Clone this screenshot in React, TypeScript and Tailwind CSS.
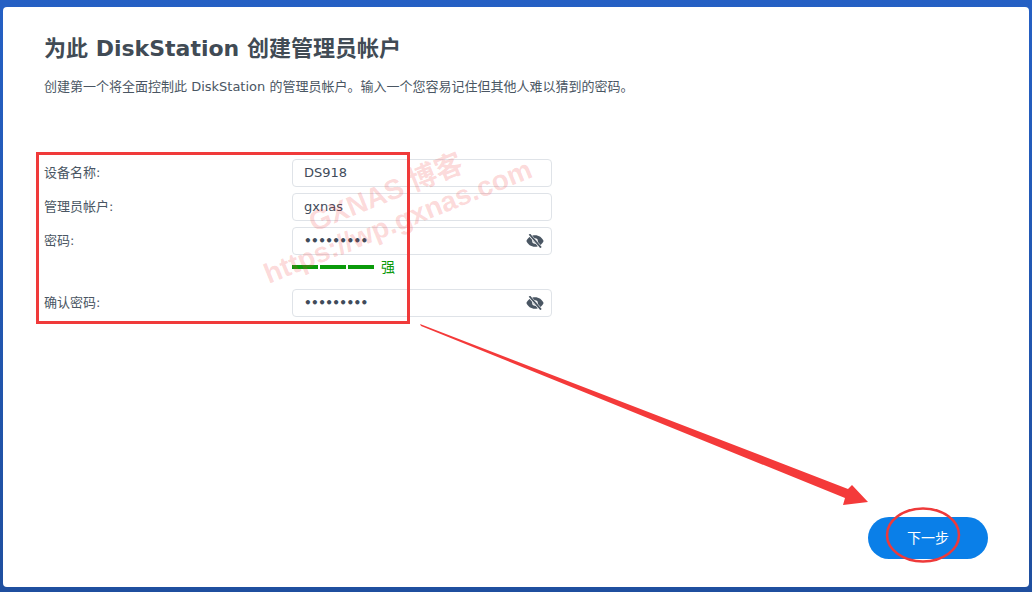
const sans = `font-["DejaVu_Sans","Noto_Sans_CJK_SC",sans-serif]`;

function EyeOff() {
  return (
    <svg width="18" height="14" viewBox="0 0 18 14" className="text-[#4a5663]" aria-hidden="true">
      <path
        fill="currentColor"
        fillRule="evenodd"
        d="M9 1.2C5 1.2 1.8 3.6 0.4 7c1.4 3.4 4.6 5.8 8.6 5.8s7.2-2.4 8.6-5.8C16.2 3.6 13 1.2 9 1.2ZM9 4.2a2.8 2.8 0 1 1 0 5.6a2.8 2.8 0 0 1 0-5.6Z"
      />
      <circle cx="9" cy="7" r="1.6" fill="currentColor" />
      <path d="M3.4 0.6L14.8 13.4" stroke="#fff" strokeWidth="3" />
      <path d="M3.4 0.2L15 13.6" stroke="currentColor" strokeWidth="1.8" />
    </svg>
  );
}

function Field({
  label,
  value,
  password,
}: {
  label: string;
  value: string;
  password?: boolean;
}) {
  return (
    <div className="flex items-center">
      <span className="w-[248px] text-[13px] text-[#4a5663]">{label}</span>
      <div className="flex h-7 w-[260px] items-center justify-between rounded-[4px] border border-[#dfe3e8] bg-white pl-[11px] pr-[7px]">
        <span className={password ? "text-[12px] font-bold tracking-[-0.6px] text-[#414b5a]" : "text-[13px] text-[#414b5a]"}>{value}</span>
        {password && <EyeOff />}
      </div>
    </div>
  );
}

function Strength() {
  return (
    <div className="flex h-[34px] items-start pl-[248px] pt-[2px]">
      <div className="mt-[8px] flex gap-[2px]">
        <span className="h-[4px] w-[26px] bg-[#0a9a0a]" />
        <span className="h-[4px] w-[26px] bg-[#0a9a0a]" />
        <span className="h-[4px] w-[26px] bg-[#0a9a0a]" />
      </div>
      <span className="ml-[7px] text-[14px] leading-[20px] text-[#0a9a0a]">强</span>
    </div>
  );
}

function Annotations() {
  return (
    <>
      {/* watermark */}
      <div className={`pointer-events-none absolute left-[286px] top-[172px] w-[200px] -rotate-[22deg] whitespace-nowrap text-center font-["Liberation_Sans","Noto_Sans_CJK_SC",sans-serif] text-[28px] font-bold text-[#f04040]/20`}>
        GXNAS 博客
      </div>
      <div className={`pointer-events-none absolute left-[248px] top-[201px] w-[300px] -rotate-[22deg] whitespace-nowrap text-center font-["Liberation_Sans",sans-serif] text-[28px] font-bold text-[#f04040]/20`}>
        https://wp.gxnas.com
      </div>
      {/* red box */}
      <div className="pointer-events-none absolute left-[36px] top-[152px] h-[172px] w-[374px] border-[3px] border-[#f03a3a]" />
      {/* arrow and circle */}
      <svg className="pointer-events-none absolute left-0 top-0" width="1032" height="592" aria-hidden="true">
        <path d="M420 324L848 489L852 485L868 502L843 505L845 498L421 326Z" fill="#f43a3a" />
        <ellipse cx="923" cy="535" rx="36" ry="26.5" fill="none" stroke="#ee3a3a" strokeWidth="2.5" />
      </svg>
    </>
  );
}

export default function App() {
  return (
    <div className={`relative h-[592px] w-[1032px] overflow-hidden bg-linear-to-b from-[#2560c4] to-[#1f4f9f] pb-[5px] pl-[3px] pr-[3px] pt-[7px] ${sans}`}>
      <div className="flex h-full flex-col rounded-[4px] bg-white pl-[41px] pr-[41px]">
        <h1 className="mt-[28px] text-[22px] font-bold leading-[28px] text-[#414b55]">为此 DiskStation 创建管理员帐户</h1>
        <p className="mt-[14px] text-[13px] leading-[20px] text-[#4a5663]">
          创建第一个将全面控制此 DiskStation 的管理员帐户。输入一个您容易记住但其他人难以猜到的密码。
        </p>
        <div className="mt-[62px] flex flex-col gap-[6px]">
          <Field label="设备名称:" value="DS918" />
          <Field label="管理员帐户:" value="gxnas" />
          <Field label="密码:" value="•••••••••" password />
        </div>
        <Strength />
        <Field label="确认密码:" value="•••••••••" password />
        <div className="mt-auto mb-[28px] flex justify-end">
          <button className="h-[42px] w-[120px] rounded-full bg-[#0a7fe8] text-[14px] text-white">下一步</button>
        </div>
      </div>
      <Annotations />
    </div>
  );
}
